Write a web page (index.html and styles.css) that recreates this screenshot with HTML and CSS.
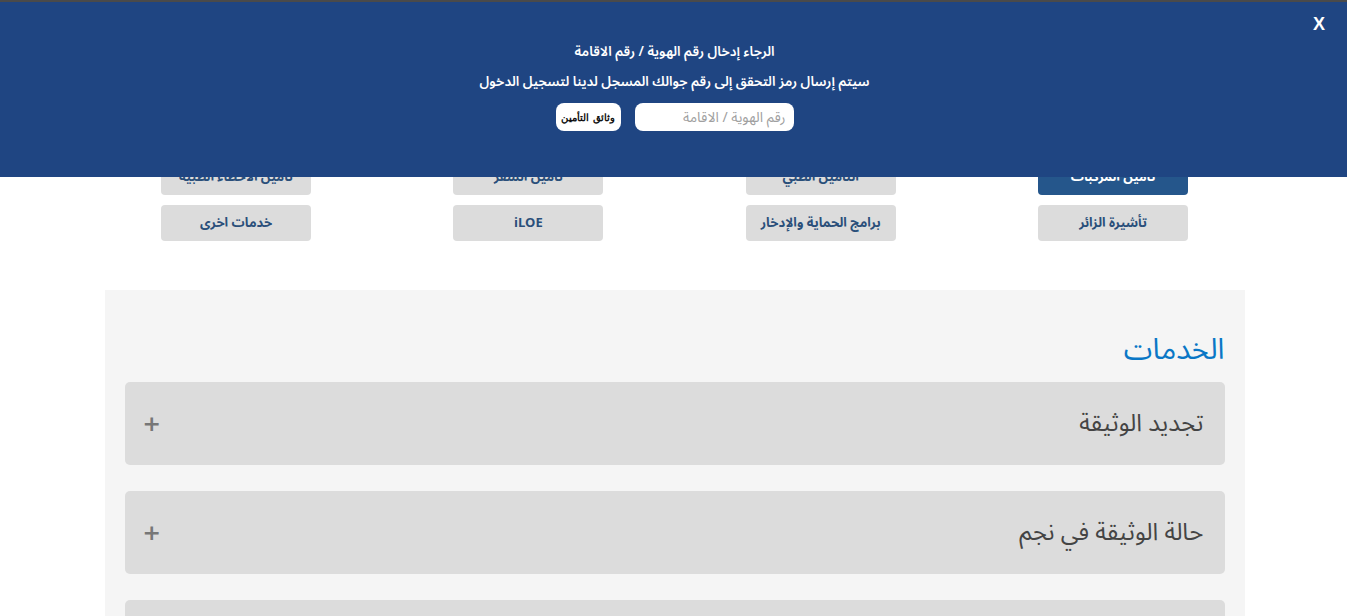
FILE: index.html
```html
<!DOCTYPE html>
<html lang="ar" dir="rtl">
<head>
<meta charset="utf-8">
<link rel="stylesheet" href="styles.css">
</head>
<body>
<div class="topline"></div>
<div class="page">
  <div class="tabs">
    <a class="tab active">تأمين المركبات</a>
    <a class="tab">التأمين الطبي</a>
    <a class="tab">تأمين السفر</a>
    <a class="tab">تأمين الأخطاء الطبية</a>
    <a class="tab">تأشيرة الزائر</a>
    <a class="tab">برامج الحماية والإدخار</a>
    <a class="tab">iLOE</a>
    <a class="tab">خدمات اخرى</a>
  </div>
  <section class="services">
    <h2 class="title">الخدمات</h2>
    <div class="acc"><span class="acc-text">تجديد الوثيقة</span><span class="plus">+</span></div>
    <div class="acc"><span class="acc-text">حالة الوثيقة في نجم</span><span class="plus">+</span></div>
    <div class="acc"></div>
  </section>
</div>
<div class="banner">
  <span class="close">X</span>
  <p class="line1">الرجاء إدخال رقم الهوية / رقم الاقامة</p>
  <p class="line2">سيتم إرسال رمز التحقق إلى رقم جوالك المسجل لدينا لتسجيل الدخول</p>
  <div class="form">
    <input class="idinput" type="text" placeholder="رقم الهوية / الاقامة">
    <button class="docbtn">وثائق التأمين</button>
  </div>
</div>
</body>
</html>
```
FILE: styles.css
```css
html, body {
  margin: 0;
  padding: 0;
  background: #ffffff;
  font-family: "Noto Sans Arabic", "DejaVu Sans", "Noto Sans", sans-serif;
  overflow: hidden;
}
.topline {
  height: 2px;
  background: #4a4a4a;
}
.page {
  padding-top: 157px;
  padding-left: 2px;
}
.tabs {
  width: 1027px;
  margin: 0 auto;
  display: grid;
  grid-template-columns: repeat(4, 150px);
  justify-content: space-between;
  row-gap: 10px;
}
.tab {
  height: 36px;
  border-radius: 4px;
  background: #dcdcdc;
  color: #2a4f7a;
  font-size: 13px;
  font-weight: bold;
  display: flex;
  align-items: center;
  justify-content: center;
}
.tab.active {
  background: #25568b;
  color: #ffffff;
}
.services {
  width: 1100px;
  margin: 49px auto 0;
  background: #f5f5f5;
  padding: 36px 20px 20px;
  min-height: 400px;
}
.title {
  margin: 0 0 8px;
  font-size: 29px;
  font-weight: normal;
  color: #0a77c6;
  line-height: 48px;
  height: 48px;
}
.acc {
  height: 83px;
  background: #dcdcdc;
  border-radius: 5px;
  margin-bottom: 26px;
  display: flex;
  align-items: center;
  justify-content: space-between;
  padding: 0 21px 0 18px;
}
.acc-text {
  font-size: 24px;
  color: #444444;
}
.plus {
  font-size: 22px;
  font-weight: bold;
  color: #777777;
  font-family: "DejaVu Sans", sans-serif;
}
.banner {
  position: fixed;
  top: 2px;
  left: 0;
  right: 0;
  height: 175px;
  padding-left: 2px;
  background: #1f4582;
  color: #ffffff;
  text-align: center;
  display: flex;
  flex-direction: column;
  align-items: center;
}
.close {
  position: absolute;
  top: 12px;
  right: 22px;
  font-family: "Liberation Sans", sans-serif;
  font-weight: bold;
  font-size: 18px;
}
.line1 {
  margin: 39px 0 0;
  font-size: 13.5px;
  font-weight: 600;
  line-height: 22px;
}
.line2 {
  margin: 8px 0 0;
  font-size: 13.5px;
  font-weight: 600;
  line-height: 22px;
}
.form {
  margin-top: 10px;
  display: flex;
  gap: 14px;
  align-items: center;
}
.idinput {
  width: 159px;
  height: 28px;
  box-sizing: border-box;
  border: none;
  border-radius: 8px;
  padding: 0 8px;
  font-family: inherit;
  font-size: 14px;
  direction: rtl;
  outline: none;
}
.idinput::placeholder {
  color: #a0a0a0;
}
.docbtn {
  width: 65px;
  height: 28px;
  border: none;
  border-radius: 8px;
  background: #ffffff;
  color: #111111;
  font-size: 10px;
  font-weight: bold;
  font-family: "DejaVu Serif", serif;
  padding: 0;
}
```
